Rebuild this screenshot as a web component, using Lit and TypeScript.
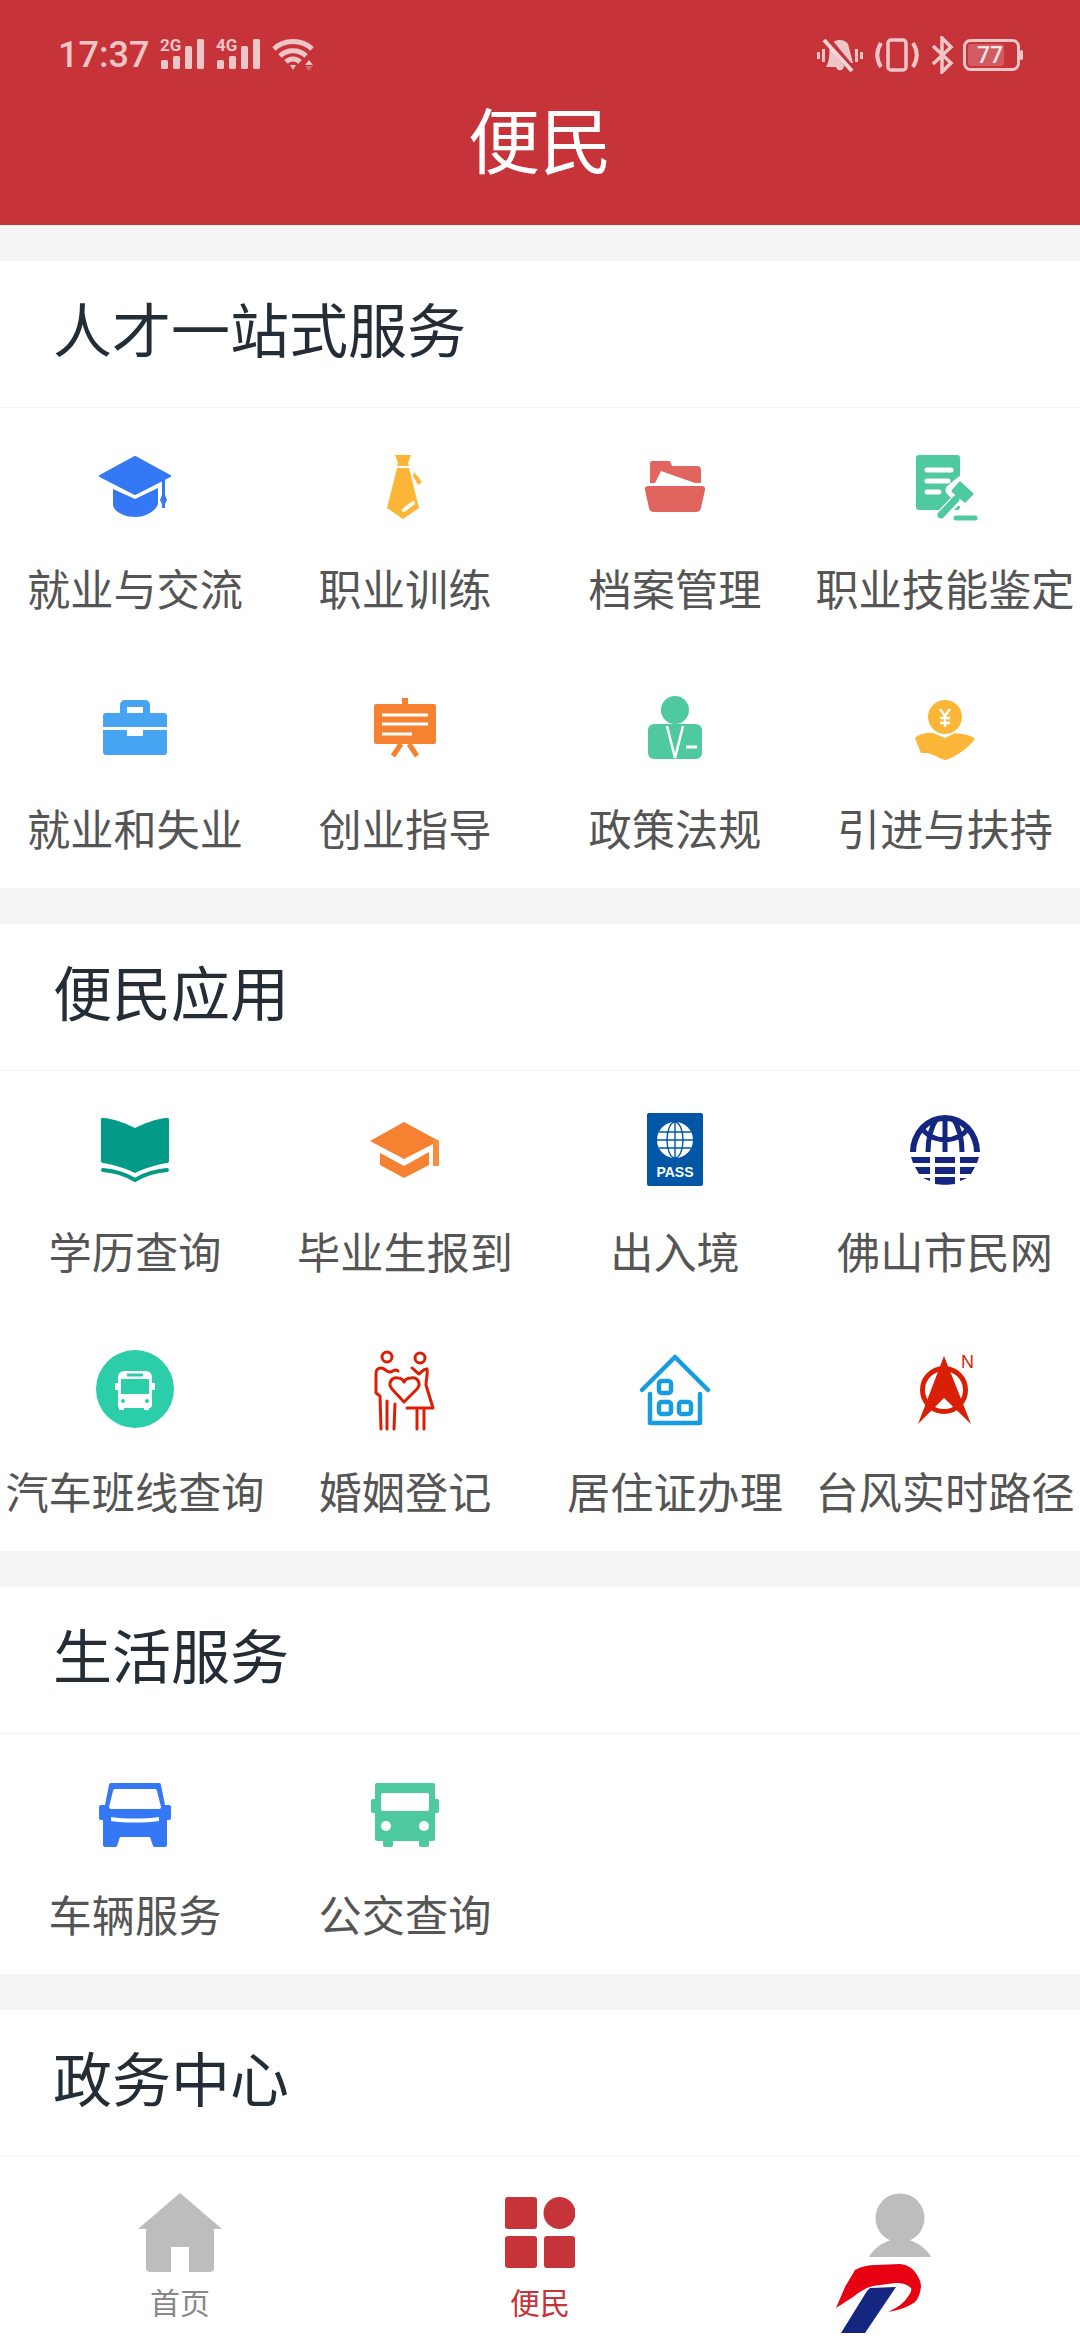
import { LitElement, html, css, svg } from 'lit';
import { customElement } from 'lit/decorators.js';

const BLUE = '#3578f6';
const AMBER = '#fbb637';
const GREEN = '#4fc99f';
const ORANGE = '#f58131';
const RED = '#d91f06';

// every icon is drawn around 0,0 in a 96 box, one unit is one screen pixel
const icons: Record<string, unknown> = {
  cap: svg`<path fill=${BLUE} d="M-22 3L0 13 23 2V18C20 26 10 31 0 31S-22 26-22 18Z"/>
    <path fill=${BLUE} stroke=${BLUE} stroke-width="2" stroke-linejoin="round" d="M0-29L35-10 0 8-35-10Z"/>
    <path fill=${BLUE} d="M27-7h3V9l2 5-2 4v4h-3v-4l-2-4 2-5Z"/>`,
  tie: svg`<g fill=${AMBER}>
    <path d="M-10-31H6L3-23 4-20H-8L-7-23Z"/>
    <path d="M-8-18H4L14 22-2 33-18 22Z"/>
    <path d="M9-14L17-4 13-1 8-10Z"/>
    </g><path d="M-1 24L8 17" stroke="#fff" stroke-width="4" stroke-linecap="round"/>`,
  folder: svg`<path fill="#e2645e" d="M-25-23a2 2 0 0 1 2-2H-5L-3-20H22a4 4 0 0 1 4 4V-3H20L-14-15-20-3H-25Z"/>
    <path fill="#e2645e" d="M-27 0H27a3 3 0 0 1 3 4L26 22a5 5 0 0 1-5 4H-21a5 5 0 0 1-5-4L-30 4a3 3 0 0 1 3-4Z"/>`,
  gavel: svg`<path fill=${GREEN} d="M-26-31H12a3 3 0 0 1 3 3V21a3 3 0 0 1-3 3H-26a3 3 0 0 1-3-3V-28a3 3 0 0 1 3-3Z"/>
    <path d="M-18-16H6M-18-5H3M-18 6H-6" stroke="#fff" stroke-width="5" stroke-linecap="round"/>
    <path d="M-4 30L12 13M6 4L17-5 29 8 19 17Z" stroke="#fff" stroke-width="11" stroke-linejoin="round" fill="#fff"/>
    <path d="M-4 29L11 13" stroke=${GREEN} stroke-width="7" stroke-linecap="round"/>
    <path fill=${GREEN} stroke=${GREEN} stroke-width="3" stroke-linejoin="round" d="M8 5L15-3 27 8 20 15Z"/>
    <path d="M11 32H30" stroke=${GREEN} stroke-width="5" stroke-linecap="round"/>`,
  case: svg`<path fill="#47a4f2" fill-rule="evenodd" d="M-15-13V-21a5 5 0 0 1 5-5H10a5 5 0 0 1 5 5V-13H29a3 3 0 0 1 3 3V1H-32V-10a3 3 0 0 1 3-3ZM-8-13H8V-19H-8Z"/>
    <path fill="#47a4f2" d="M-32 4H-8V10H8V4H32V26a3 3 0 0 1-3 3H-29a3 3 0 0 1-3-3Z"/>`,
  board: svg`<path d="M0-28V-20" stroke=${ORANGE} stroke-width="6"/>
    <rect x="-31" y="-22" width="62" height="40" rx="2" fill=${ORANGE}/>
    <path d="M-23-11H23M-23-2H23M-23 8H7" stroke="#fff" stroke-width="3"/>
    <path d="M-4 18L-12 30M4 18L12 30" stroke=${ORANGE} stroke-width="5"/>`,
  suit: svg`<circle cy="-16" r="14" fill=${GREEN}/>
    <rect x="-27" y="-2" width="54" height="35" rx="6" fill=${GREEN}/>
    <path d="M-8 0L0 32 8 0" fill="none" stroke="#fff" stroke-width="2.5"/>
    <path d="M11 21H22" stroke="#fff" stroke-width="3"/>`,
  coin: svg`<circle cy="-9" r="17" fill=${AMBER}/>
    <path d="M-5-17L0-10 5-17M-5-8H5M-5-3H5M0-10V1" fill="none" stroke="#fff" stroke-width="2.4"/>
    <path fill=${AMBER} d="M-30 12C-27 8-16 6-12 7L0 12 10 7C18 8 26 9 30 13 24 21 10 32 0 34-6 32-16 26-20 27L-24 27Z"/>`,
  book: svg`<path fill="#049a88" d="M-34-29a2 2 0 0 1 3-2C-20-30-8-25 0-21 8-25 20-30 31-31a2 2 0 0 1 3 2V12a2 2 0 0 1-2 2C20 16 8 20 0 24-8 20-20 16-32 14a2 2 0 0 1-2-2Z"/>
    <path d="M-32 21C-20 22-8 26 0 31 8 26 20 22 32 21" fill="none" stroke="#049a88" stroke-width="4" stroke-linecap="round"/>`,
  grad: svg`<path fill=${ORANGE} d="M-1-27L34-8-1 10-35-8Z"/>
    <path fill=${ORANGE} d="M-25 4L-1 17 24 3V16L-1 29-25 16Z"/>
    <path fill="#f68e3f" d="M28-11L34-8V17H28Z"/>`,
  bus: svg`<circle r="39" fill="#2bcea8"/>
    <path fill="#fff" d="M-11-18H11a6 6 0 0 1 6 6V-6h3V1h-3V16a3 3 0 0 1-3 3V21h-5V19H-11V21H-16V19a3 3 0 0 1-1-3V1h-3V-6h3V-12a6 6 0 0 1 6-6Z"/>
    <rect x="-14" y="-10" width="28" height="15" fill="#2bcea8"/>
    <path d="M-8-14H8" stroke="#2bcea8" stroke-width="3"/>
    <circle cx="-12" cy="12" r="2" fill="#2bcea8"/><circle cx="12" cy="12" r="2" fill="#2bcea8"/>`,
  couple: svg`<g fill="none" stroke=${RED} stroke-width="3" stroke-linejoin="round" stroke-linecap="round">
    <circle cx="-18" cy="-32" r="5"/><circle cx="15" cy="-31" r="5"/>
    <path d="M-7-18C-10-21-12-17-15-17-19-17-20-21-24-21-27-21-29-19-29-16V4L-25 7-24 40M-18 12V40M-10 15L-11 40"/>
    <path d="M7-21C9-20 11-17 14-15 17-17 19-21 22-20 23-15 21-10 21-4L28 19H2M12 19V40M19 19V40"/>
    <path d="M-1 13L-13 0C-18-6-13-12-7-11-4-11-2-9-1-7 0-9 3-11 6-11 12-12 17-6 12 0Z"/>
    </g>`,
  passport: svg`<rect x="-28" y="-36" width="56" height="73" rx="2" fill="#0156a6"/>
    <circle cy="-9" r="18" fill="#fff"/>
    <g fill="none" stroke="#0156a6" stroke-width="1.4">
    <ellipse cy="-9" rx="8" ry="18"/><path d="M0-27V9M-18-9H18M-16-17H16M-16-1H16"/></g>
    <text y="28" text-anchor="middle" font-size="14" font-weight="700" font-family="'Liberation Sans',sans-serif" fill="#fff">PASS</text>`,
  globe: svg`<path fill="#14267f" d="M-35 3A35 37 0 0 1 35 3H29A29 31 0 0 0-29 3Z"/>
    <g fill="none" stroke="#14267f" stroke-width="5">
    <path d="M0-32V3M-8-31C-14-22-17-12-17 3M8-31C14-22 17-12 17 3M-24-22C-14-5 14-5 24-22"/></g>
    <path fill="#14267f" d="M-34 8H-15V14H-32ZM-10 8H10V14H-10ZM15 8H34L32 14H15ZM-30 18H-15V25H-26ZM-10 18H10V25H-10ZM15 18H30L26 25H15ZM-15 29H-22L-15 32ZM-10 28H10V35C4 36-4 36-10 35ZM15 29H22L15 32Z"/>`,
  house: svg`<g fill="none" stroke="#169ce0" stroke-width="4.5" stroke-linecap="round" stroke-linejoin="round">
    <path d="M-33 1L0-32 33 1"/><path d="M-25 5V34H25V5"/>
    <rect x="-16" y="-8" width="12" height="12" rx="2.5"/>
    <rect x="-16" y="13" width="12" height="12" rx="2.5"/>
    <rect x="4" y="13" width="12" height="12" rx="2.5"/></g>`,
  compass: svg`<circle cx="-1" cy="1" r="21.5" fill="none" stroke=${RED} stroke-width="5"/>
    <path fill=${RED} d="M-1-33L26 35-1 9-27 35Z"/>
    <text x="16" y="-21" font-size="18" font-family="'Liberation Sans',sans-serif" fill=${RED}>N</text>`,
  van: svg`<path fill=${BLUE} fill-rule="evenodd" d="M-24-29H24a2 2 0 0 1 2 2L30-7H34a2 2 0 0 1 2 2V6a2 2 0 0 1-2 2H32V33a2 2 0 0 1-2 2H20a2 2 0 0 1-2-1L15 25H-15L-18 34a2 2 0 0 1-2 1H-30a2 2 0 0 1-2-2V8H-34a2 2 0 0 1-2-2V-5a2 2 0 0 1 2-2H-30L-26-27a2 2 0 0 1 2-2ZM-20-23a2 2 0 0 0-2 2L-26-5a2 2 0 0 0 2 2H24a2 2 0 0 0 2-2L22-21a2 2 0 0 0-2-2Z"/>
    <path fill="#fff" d="M-24 5C-10 7 10 7 24 5V9C10 11-10 11-24 9Z"/>`,
  coach: svg`<path fill=${GREEN} d="M-28-29H28a2 2 0 0 1 2 2V-13H32a2 2 0 0 1 2 2V-1a2 2 0 0 1-2 2H30V27a2 2 0 0 1-2 2H24V33a2 2 0 0 1-2 2H16a2 2 0 0 1-2-2V29H-12V33a2 2 0 0 1-2 2H-20a2 2 0 0 1-2-2V29H-28a2 2 0 0 1-2-2V1H-32a2 2 0 0 1-2-2V-11a2 2 0 0 1 2-2H-30V-27a2 2 0 0 1 2-2Z"/>
    <rect x="-24" y="-19" width="48" height="18" rx="2" fill="#fff"/>
    <circle cx="-19" cy="14" r="5" fill="#fff"/><circle cx="19" cy="14" r="5" fill="#fff"/>`,
};

const sections = [
  {
    title: '人才一站式服务',
    items: [
      ['cap', '就业与交流'], ['tie', '职业训练'], ['folder', '档案管理'], ['gavel', '职业技能鉴定'],
      ['case', '就业和失业'], ['board', '创业指导'], ['suit', '政策法规'], ['coin', '引进与扶持'],
    ],
  },
  {
    title: '便民应用',
    items: [
      ['book', '学历查询'], ['grad', '毕业生报到'], ['passport', '出入境'], ['globe', '佛山市民网'],
      ['bus', '汽车班线查询'], ['couple', '婚姻登记'], ['house', '居住证办理'], ['compass', '台风实时路径'],
    ],
  },
  {
    title: '生活服务',
    items: [['van', '车辆服务'], ['coach', '公交查询']],
  },
  { title: '政务中心', items: [] },
];

@customElement('status-bar')
class StatusBar extends LitElement {
  static styles = css`
    :host {
      display: flex;
      align-items: center;
      height: 34px;
      padding: 38px 57px 0 58px;
      color: rgba(255, 255, 255, 0.72);
    }
    .time {
      flex: none;
      width: 102px;
      font: 500 36px/34px Roboto, sans-serif;
    }
    svg {
      display: block;
      flex: none;
    }
    .signal,
    .gap {
      margin-right: 12px;
    }
    .gap-small {
      margin-right: 9px;
    }
    .spacer {
      flex: 1;
    }
    text {
      font-family: Roboto, sans-serif;
    }
  `;

  signal(name: string) {
    return html`<svg class="signal" width="44" height="50" viewBox="0 -8 44 50" fill="#fff" fill-opacity=".72">
      <text x="0" y="13" font-size="17" font-weight="700">${name}</text>
      <rect x="1" y="22" width="7" height="9" rx="1.500"/>
      <rect x="13" y="18" width="7" height="13" rx="1.500"/>
      <rect x="25" y="8" width="7" height="23" rx="1.500"/>
      <rect x="37" y="1" width="7" height="30" rx="1.500"/>
    </svg>`;
  }

  render() {
    return html`
      <span class="time">17:37</span>
      ${this.signal('2G')}
      ${this.signal('4G')}
      <svg width="42" height="34" viewBox="0 0 42 34" fill="none" stroke="#fff" stroke-opacity=".72" stroke-width="5">
        <path d="M2 11C12 1 30 1 40 11M8 18C15 11 27 11 34 18M14 24C18 20 24 20 28 24"/>
        <path d="M18 27H24L21 32Z" fill="#fff" fill-opacity=".72" stroke="none"/>
        <path d="M37 22L41 27H33Z" fill="#fff" fill-opacity=".72" stroke="none"/>
        <path d="M33 28H41L37 33Z" fill="#fff" fill-opacity=".25" stroke="none"/>
      </svg>
      <div class="spacer"></div>
      <svg class="gap" width="46" height="36" viewBox="0 0 46 36" fill="#fff" fill-opacity=".72">
        <path d="M13 9C16 2 27 1 31 7L36 26H28C27 35 21 35 19 30H9C13 24 12 15 13 9Z"/>
        <path d="M9 1L37 35" stroke="#c63339" stroke-width="7" fill="none"/>
        <path d="M7 3L35 34" stroke="#fff" stroke-opacity=".8" stroke-width="4" fill="none"/>
        <rect x="0" y="15" width="3" height="7"/><rect x="5" y="12" width="3" height="13"/>
        <rect x="38" y="12" width="3" height="13"/><rect x="43" y="15" width="3" height="7"/>
      </svg>
      <svg class="gap" width="44" height="36" viewBox="0 0 44 36" fill="none" stroke="#fff" stroke-opacity=".72" stroke-width="3.5">
        <rect x="13" y="3" width="18" height="30" rx="3"/>
        <path d="M6 6C1 14 1 22 6 30M38 6C43 14 43 22 38 30" stroke-width="4"/>
      </svg>
      <svg class="gap-small" width="23" height="38" viewBox="0 0 23 38" fill="none" stroke="#fff" stroke-opacity=".72" stroke-width="3.500">
        <path d="M2 10L20 27 11 36V2L20 11 2 28"/>
      </svg>
      <svg width="60" height="32" viewBox="0 0 60 32">
        <rect x="1.500" y="1.500" width="54" height="29" rx="6" fill="none" stroke="#fff" stroke-opacity=".72" stroke-width="3"/>
        <rect x="5" y="5" width="36" height="22" rx="3" fill="#fff" fill-opacity=".2"/>
        <rect x="57" y="11" width="3" height="10" rx="1.500" fill="#fff" fill-opacity=".72"/>
        <text x="27" y="24" text-anchor="middle" font-size="23" font-weight="500" fill="#fff" fill-opacity=".85">77</text>
      </svg>
    `;
  }
}

@customElement('tab-bar')
class TabBar extends LitElement {
  static styles = css`
    :host {
      display: flex;
      height: 183px;
      background: #fff;
      border-top: 2px solid #f7f7f7;
      flex: none;
      font-family: 'Noto Sans CJK SC', sans-serif;
    }
    .tab {
      flex: 1;
      position: relative;
      display: flex;
      flex-direction: column;
      align-items: center;
      padding-top: 36px;
      font-size: 30px;
      line-height: 40px;
      color: #888;
    }
    .tab svg {
      display: block;
      height: 84px;
      margin-bottom: 4px;
    }
    .on {
      color: #c63339;
    }
    .tab .logo {
      position: absolute;
      left: 116px;
      top: 107px;
      height: 69px;
      margin: 0;
    }
  `;

  render() {
    return html`
      <div class="tab">
        <svg width="84" height="84" viewBox="0 0 84 84" fill="#bdbdbd">
          <path d="M42 0L84 36H76V75a4 4 0 0 1-4 4H51V54H33V79H12a4 4 0 0 1-4-4V36H0Z"/>
        </svg>
        <span>首页</span>
      </div>
      <div class="tab on">
        <svg width="70" height="84" viewBox="0 0 70 84" fill="#c63339">
          <rect x="0" y="4" width="32" height="32" rx="3"/>
          <circle cx="54.500" cy="20" r="16"/>
          <rect x="0" y="43" width="32" height="32" rx="3"/>
          <rect x="39" y="43" width="31" height="32" rx="3"/>
        </svg>
        <span>便民</span>
      </div>
      <div class="tab">
        <svg width="62" height="84" viewBox="0 0 62 84" fill="#bdbdbd">
          <circle cx="31" cy="25" r="24.500"/>
          <path d="M0 64C5 55 13 50 22 47H40C49 50 57 55 62 64Z"/>
        </svg>
        <svg class="logo" width="86" height="69" viewBox="0 0 86 69">
          <path fill="#14267f" d="M34 24L60 23 29 69H5L31 27Z"/>
          <path fill="#e60012" d="M0 44L9 23 19 6C26 2 34 1 41 1L64 0C72 1 76 4 79 8 83 13 85 18 85 23 84 30 82 35 79 38 71 44 62 46 52 48 62 43 68 39 71 34 75 29 76 26 75 24 71 20 66 19 59 19L37 22C29 24 23 28 17 33Z"/>
        </svg>
      </div>
    `;
  }
}

@customElement('app-root')
class AppRoot extends LitElement {
  static styles = css`
    :host {
      display: flex;
      flex-direction: column;
      height: 2340px;
      overflow: hidden;
      background: #f5f5f5;
      font-family: 'Noto Sans CJK SC', sans-serif;
    }
    header {
      flex: none;
      height: 225px;
      background: #c63339;
    }
    h1 {
      margin: 0;
      padding-top: 17px;
      font-size: 72px;
      line-height: 96px;
      font-weight: 400;
      color: #fff;
      text-align: center;
    }
    main {
      flex: 1;
      min-height: 0;
      overflow: hidden;
      display: flex;
      flex-direction: column;
      gap: 36px;
      padding-top: 36px;
    }
    section {
      flex: none;
      background: #fff;
    }
    h2 {
      margin: 0;
      height: 146px;
      padding-left: 53px;
      font-size: 59px;
      line-height: 134px;
      font-weight: 400;
      color: #242c36;
      border-bottom: 1px solid #f3f3f3;
    }
    .grid {
      display: grid;
      grid-template-columns: repeat(4, 270px);
    }
    .item {
      display: flex;
      flex-direction: column;
      align-items: center;
      height: 240px;
      padding-top: 30px;
      box-sizing: border-box;
    }
    .item svg {
      display: block;
      flex: none;
      margin-bottom: 23px;
    }
    .item span {
      font-size: 43.200px;
      line-height: 60px;
      color: #555;
      white-space: nowrap;
    }
  `;

  render() {
    return html`
      <header>
        <status-bar></status-bar>
        <h1>便民</h1>
      </header>
      <main>
        ${sections.map(
          (s) => html`<section>
            <h2>${s.title}</h2>
            <div class="grid">
              ${s.items.map(
                ([icon, label]) => html`<div class="item">
                  <svg width="96" height="96" viewBox="-48 -48 96 96">${icons[icon]}</svg>
                  <span>${label}</span>
                </div>`
              )}
            </div>
          </section>`
        )}
      </main>
      <tab-bar></tab-bar>
    `;
  }
}
